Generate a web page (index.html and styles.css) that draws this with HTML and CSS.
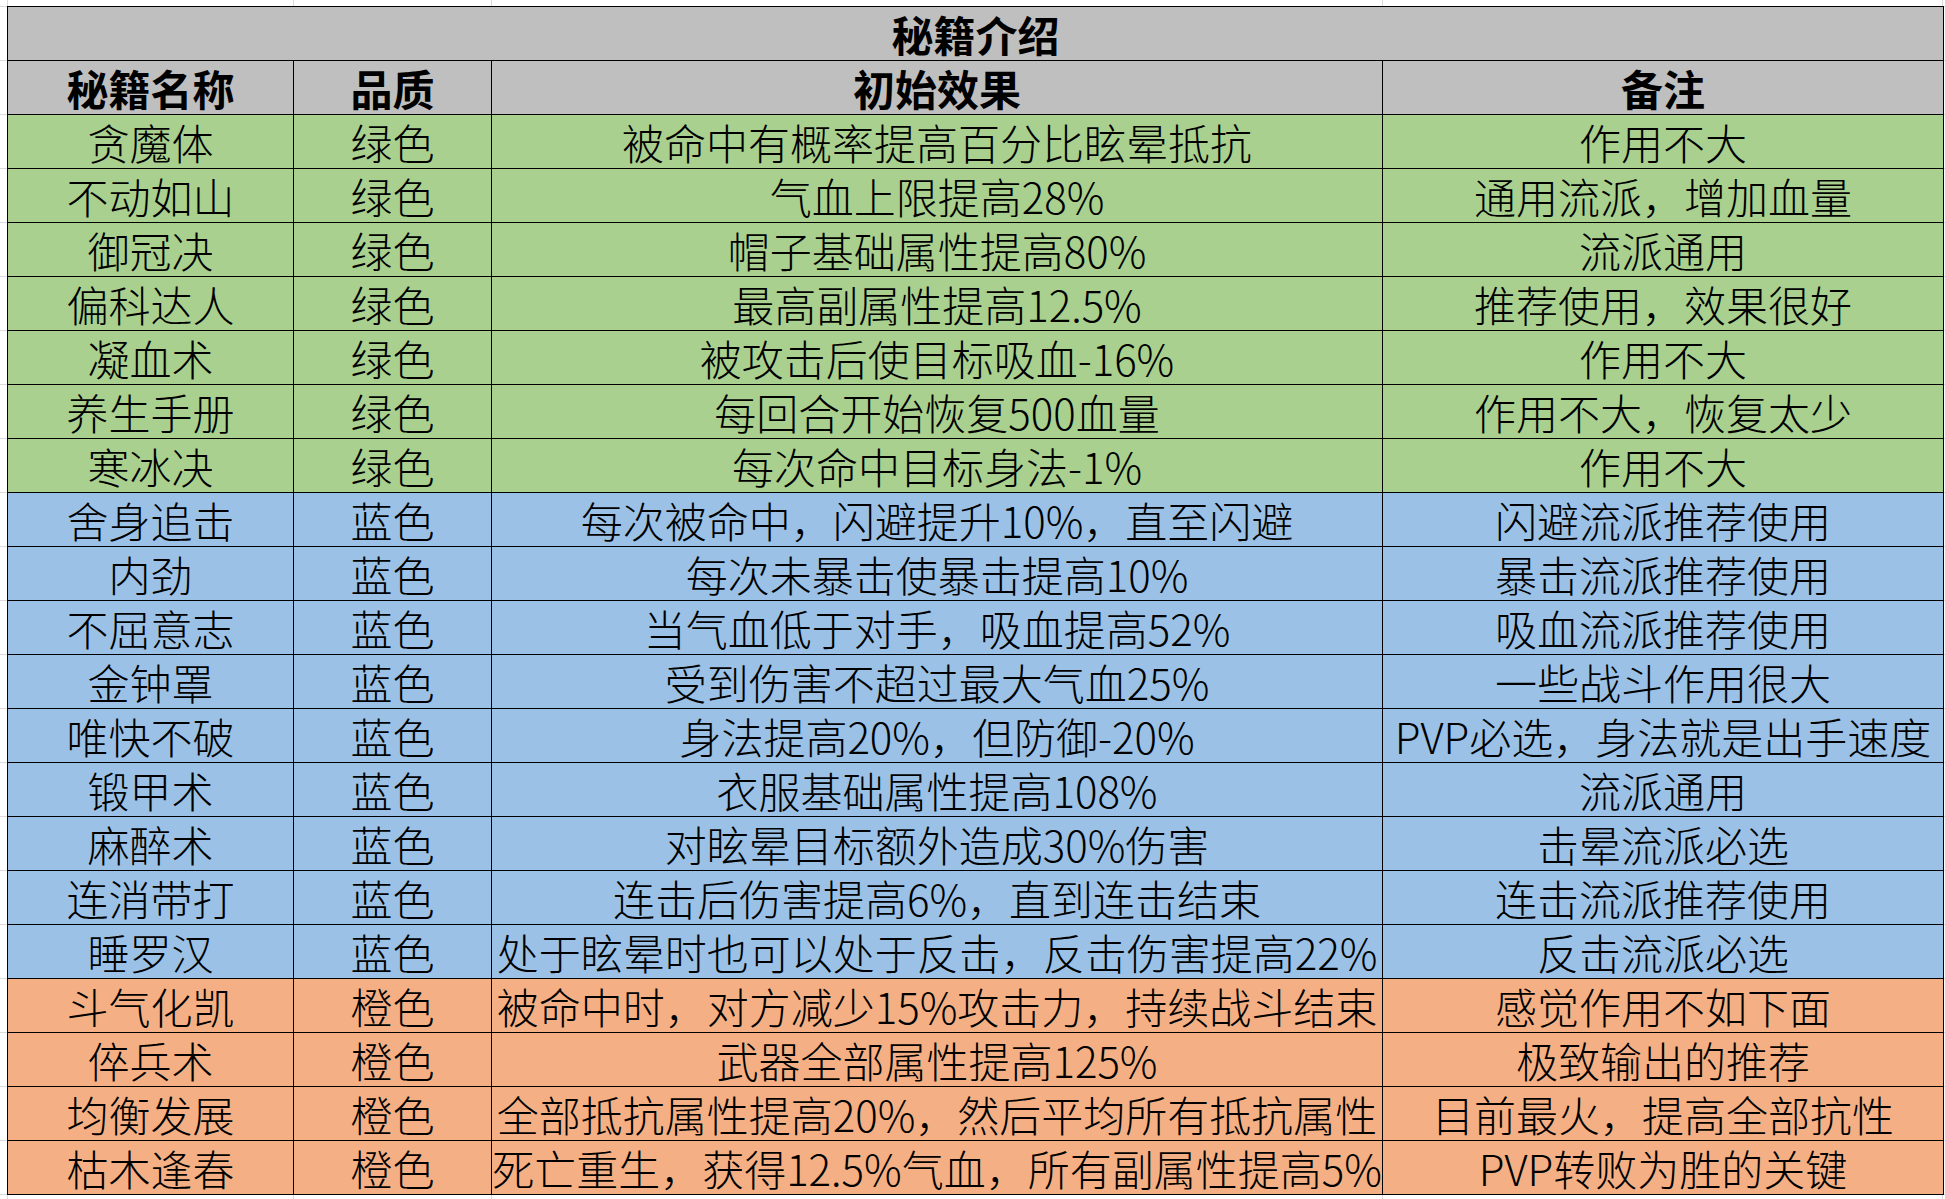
FILE: index.html
```html
<!DOCTYPE html>
<html lang="zh-CN">
<head>
<meta charset="utf-8">
<title>秘籍介绍</title>
<link rel="stylesheet" href="styles.css">
</head>
<body>
<div class="sheet-wrap">
<table class="sheet">
  <colgroup>
    <col class="c-name"><col class="c-qual"><col class="c-eff"><col class="c-note">
  </colgroup>
  <thead>
    <tr class="title"><th colspan="4">秘籍介绍</th></tr>
    <tr class="head"><th>秘籍名称</th><th>品质</th><th>初始效果</th><th>备注</th></tr>
  </thead>
  <tbody>
    <tr class="green"><td>贪魔体</td><td>绿色</td><td>被命中有概率提高百分比眩晕抵抗</td><td>作用不大</td></tr>
    <tr class="green"><td>不动如山</td><td>绿色</td><td>气血上限提高28%</td><td>通用流派，增加血量</td></tr>
    <tr class="green"><td>御冠决</td><td>绿色</td><td>帽子基础属性提高80%</td><td>流派通用</td></tr>
    <tr class="green"><td>偏科达人</td><td>绿色</td><td>最高副属性提高12.5%</td><td>推荐使用，效果很好</td></tr>
    <tr class="green"><td>凝血术</td><td>绿色</td><td>被攻击后使目标吸血-16%</td><td>作用不大</td></tr>
    <tr class="green"><td>养生手册</td><td>绿色</td><td>每回合开始恢复500血量</td><td>作用不大，恢复太少</td></tr>
    <tr class="green"><td>寒冰决</td><td>绿色</td><td>每次命中目标身法-1%</td><td>作用不大</td></tr>
    <tr class="blue"><td>舍身追击</td><td>蓝色</td><td>每次被命中，闪避提升10%，直至闪避</td><td>闪避流派推荐使用</td></tr>
    <tr class="blue"><td>内劲</td><td>蓝色</td><td>每次未暴击使暴击提高10%</td><td>暴击流派推荐使用</td></tr>
    <tr class="blue"><td>不屈意志</td><td>蓝色</td><td>当气血低于对手，吸血提高52%</td><td>吸血流派推荐使用</td></tr>
    <tr class="blue"><td>金钟罩</td><td>蓝色</td><td>受到伤害不超过最大气血25%</td><td>一些战斗作用很大</td></tr>
    <tr class="blue"><td>唯快不破</td><td>蓝色</td><td>身法提高20%，但防御-20%</td><td>PVP必选，身法就是出手速度</td></tr>
    <tr class="blue"><td>锻甲术</td><td>蓝色</td><td>衣服基础属性提高108%</td><td>流派通用</td></tr>
    <tr class="blue"><td>麻醉术</td><td>蓝色</td><td>对眩晕目标额外造成30%伤害</td><td>击晕流派必选</td></tr>
    <tr class="blue"><td>连消带打</td><td>蓝色</td><td>连击后伤害提高6%，直到连击结束</td><td>连击流派推荐使用</td></tr>
    <tr class="blue"><td>睡罗汉</td><td>蓝色</td><td>处于眩晕时也可以处于反击，反击伤害提高22%</td><td>反击流派必选</td></tr>
    <tr class="orange"><td>斗气化凯</td><td>橙色</td><td>被命中时，对方减少15%攻击力，持续战斗结束</td><td>感觉作用不如下面</td></tr>
    <tr class="orange"><td>倅兵术</td><td>橙色</td><td>武器全部属性提高125%</td><td>极致输出的推荐</td></tr>
    <tr class="orange"><td>均衡发展</td><td>橙色</td><td>全部抵抗属性提高20%，然后平均所有抵抗属性</td><td>目前最火，提高全部抗性</td></tr>
    <tr class="orange"><td>枯木逢春</td><td>橙色</td><td>死亡重生，获得12.5%气血，所有副属性提高5%</td><td>PVP转败为胜的关键</td></tr>
  </tbody>
</table>
</div>
</body>
</html>
```

FILE: styles.css
```css
html, body {
  margin: 0;
  padding: 0;
}

body {
  width: 1945px;
  min-height: 1199px;
  background-color: #ffffff;
  background-image:
    linear-gradient(to right, transparent 7px, #dadada 7px, #dadada 8px, transparent 8px,
      transparent 293px, #dadada 293px, #dadada 294px, transparent 294px,
      transparent 491px, #dadada 491px, #dadada 492px, transparent 492px,
      transparent 1382px, #dadada 1382px, #dadada 1383px, transparent 1383px,
      transparent 1942px, #dadada 1942px, #dadada 1943px, transparent 1943px),
    repeating-linear-gradient(to bottom, #dadada 0, #dadada 1px, transparent 1px, transparent 54px);
  background-position: 0 0, 0 6px;
  background-repeat: no-repeat, repeat;
}

.sheet-wrap {
  padding: 6px 0 0 7px;
}

.sheet {
  border-collapse: collapse;
  table-layout: fixed;
  width: 1936px;
  font-family: "Noto Sans CJK SC", sans-serif;
  font-size: 42px;
  color: #000;
}

.c-name { width: 286px; }
.c-qual { width: 198px; }
.c-eff  { width: 891px; }
.c-note { width: 561px; }

.sheet th,
.sheet td {
  border: 1px solid #000;
  height: 53px;
  padding: 0;
  line-height: 52px;
  text-align: center;
  vertical-align: bottom;
  white-space: nowrap;
  font-weight: 300;
}

.sheet th {
  font-weight: 700;
  background: #bfbfbf;
}

.green td { background: #a9d08e; }
.blue td { background: #9bc2e6; }
.orange td { background: #f4b084; }
```
